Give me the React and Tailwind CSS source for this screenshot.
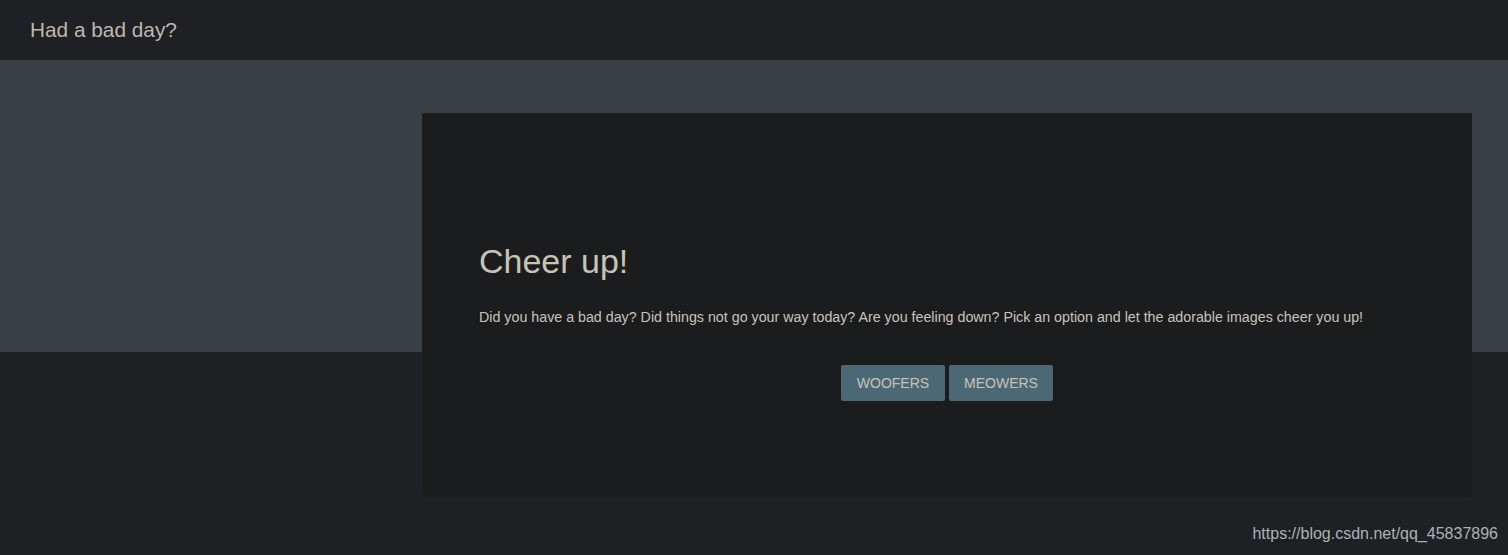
export default function App() {
  return (
    <div
      className="relative h-[555px] w-full overflow-hidden bg-[#1f2023]"
      style={{ fontFamily: '"Liberation Sans", Arial, sans-serif' }}
    >
      {/* NAVBAR */}
      <nav className="flex h-[60px] items-center px-[30px]">
        <span className="text-[20.8px] text-[#bdb8ad]">Had a bad day?</span>
      </nav>

      {/* HERO */}
      <div className="h-[292px] bg-[#393f43]" />

      {/* CARD */}
      <div className="ml-[422px] -mt-[239px] w-[1050px] h-[384px] rounded-b-[6px] bg-[#1b1c1e] pl-[57px] pr-[20px] pt-[128px]">
        <h1 className="text-[34px] leading-[40px] text-[#c8c3b6]">Cheer up!</h1>
        <p className="mt-[26px] text-[14.25px] leading-[20px] text-[#c8c3bc]">
          Did you have a bad day? Did things not go your way today? Are you feeling down? Pick an option and let the adorable images cheer you up!
        </p>
        <div className="mt-[38px] flex justify-center gap-[4px] pr-[37px]">
          <button className="h-[36px] w-[104px] rounded-[2px] bg-[#4d6875] text-[14px] uppercase text-[#c8c3b6]">
            Woofers
          </button>
          <button className="h-[36px] w-[104px] rounded-[2px] bg-[#4d6875] text-[14px] uppercase text-[#c8c3b6]">
            Meowers
          </button>
        </div>
      </div>

      {/* WATERMARK */}
      <span className="absolute bottom-[9px] right-[10px] text-[16px] text-[#a9b3b6]">
        https://blog.csdn.net/qq_45837896
      </span>
    </div>
  );
}
